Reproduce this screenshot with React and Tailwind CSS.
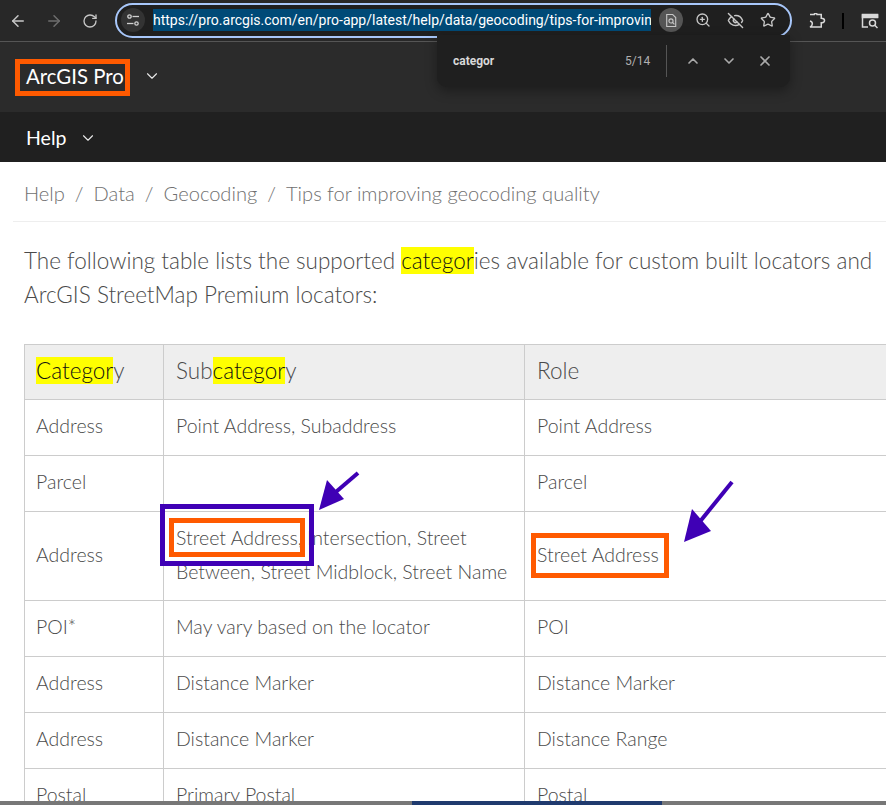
import React from "react";
import { ArrowLeft, ArrowRight, RotateCw, ZoomIn, EyeOff, Star, ChevronDown, ChevronUp, X } from "lucide-react";

const Hl = ({ children }) => <span className="bg-[#ffff00] text-[#111]">{children}</span>;

const rows = [
  ["Address", "Point Address, Subaddress", "Point Address", "h-[56px]"],
  ["Parcel", "", "Parcel", "h-[56px]"],
  ["Address", "Street Address, Intersection, Street Between, Street Midblock, Street Name", "Street Address", "h-[89px]"],
  ["POI*", "May vary based on the locator", "POI", "h-[56px]"],
  ["Address", "Distance Marker", "Distance Marker", "h-[56px]"],
  ["Address", "Distance Marker", "Distance Range", "h-[56px]"],
  ["Postal", "Primary Postal", "Postal", "h-[56px]"],
];

export default function App() {
  return (
    <div className="relative w-[886px] h-[805px] overflow-hidden bg-white font-['Lato',sans-serif] font-light text-[#4a4a4a]">
      {/* Browser toolbar */}
      <div className="flex items-center h-[42px] bg-[#282828] border-b border-[#555] pl-[9px]">
        <ArrowLeft className="w-[18px] h-[18px] text-[#c7c7c7]" strokeWidth={2} />
        <ArrowRight className="w-[18px] h-[18px] ml-[18px] text-[#6e6e6e]" strokeWidth={2} />
        <RotateCw className="w-[16px] h-[16px] ml-[19px] text-[#c7c7c7]" strokeWidth={2} />
        <div className="flex items-center ml-[17px] w-[677px] h-[35px] -mt-[1px] rounded-full border-2 border-[#a8c7fa] bg-[#1f1f1f] pl-[4px] pr-[14px]">
          <div className="flex items-center justify-center w-[24px] h-[24px] rounded-full bg-[#333]">
            <svg viewBox="0 0 14 14" className="w-[14px] h-[14px]" fill="none" stroke="#d0d0d0" strokeWidth="1.3">
              <circle cx="3.5" cy="3.5" r="1.7" />
              <path d="M6.5 3.5H13" />
              <circle cx="10.5" cy="10.5" r="1.7" />
              <path d="M1 10.5H7.5" />
            </svg>
          </div>
          <span className="ml-[8px] h-[22px] w-[498px] overflow-hidden whitespace-nowrap bg-[#004a77] text-white font-['Roboto',sans-serif] font-normal text-[14px] leading-[22px]">
            https://pro.arcgis.com/en/pro-app/latest/help/data/geocoding/tips-for-improving-geocoding-quality
          </span>
          <div className="flex items-center justify-center ml-[8px] w-[24px] h-[24px] rounded-full bg-[#555]">
            <svg viewBox="0 0 14 16" className="w-[12px] h-[15px]" fill="none" stroke="#c7c7c7" strokeWidth="1.3">
              <path d="M2 1H9L12.5 4.5V15H2Z" />
              <circle cx="7" cy="8.5" r="2.4" />
              <path d="M8.8 10.3L11 12.5" />
            </svg>
          </div>
          <ZoomIn className="ml-[12px] w-[16px] h-[16px] text-[#c7c7c7]" />
          <EyeOff className="ml-[16px] w-[17px] h-[17px] text-[#c7c7c7]" />
          <Star className="ml-[16px] w-[16px] h-[16px] text-[#c7c7c7]" />
        </div>
        <svg viewBox="0 0 18 16" className="ml-[17px] w-[17px] h-[15px]" fill="none" stroke="#d8d8d8" strokeWidth="1.6">
          <path d="M1 1.5H5.5C5.5 0.5 6.5 0.5 7 0.5C7.5 0.5 8.5 0.5 8.5 1.5H13V5.5C15 5.5 16.5 6.5 16.5 8C16.5 9.5 15 10.5 13 10.5V15H1C3 14 3.5 12.5 3.5 11.5C3.5 10.5 3 9 1 8.5" />
        </svg>
        <div className="ml-[16px] w-[2px] h-[16px] bg-black" />
        <svg viewBox="0 0 18 16" className="ml-[17px] w-[18px] h-[16px]" fill="none" stroke="#d8d8d8" strokeWidth="1.5">
          <path d="M7 14H1.5V1.5H16.5V5" />
          <path d="M1.5 2H16.5V4.5H1.5Z" fill="#d8d8d8" />
          <circle cx="11.5" cy="10" r="3" />
          <path d="M13.8 12.3L16.5 15" />
        </svg>
      </div>

      {/* Product header */}
      <div className="flex items-center h-[70px] bg-[#2b2b2b] pl-[15px]">
        <div className="flex items-center h-[37px] border-[5px] border-[#ff5a00] pl-[6px] pb-[2px] text-white font-normal text-[20.4px] leading-none w-[115px] whitespace-nowrap">
          ArcGIS Pro
        </div>
        <ChevronDown className="ml-[13px] w-[18px] h-[18px] text-[#e8e8e8] -mt-[2px]" strokeWidth={1.5} />
      </div>

      {/* Help bar */}
      <div className="flex items-center h-[50px] bg-[#202020] pl-[26px] pt-[1px] text-white font-normal text-[19.5px]">
        Help
        <ChevronDown className="ml-[13px] w-[18px] h-[18px] text-[#e8e8e8]" strokeWidth={1.5} />
      </div>

      {/* Breadcrumb */}
      <div className="ml-[13px] h-[60px] border-b border-[#eee] pl-[11px] pt-[3px] flex items-center gap-[10px] text-[20.1px] text-[#707070]">
        <span>Help</span><span>/</span><span>Data</span><span>/</span><span>Geocoding</span><span>/</span><span>Tips for improving geocoding quality</span>
      </div>

      {/* Body */}
      <div className="pl-[24px] pt-[22px]">
        <p className="w-[862px] text-[22.5px] leading-[34px] whitespace-nowrap">
          The following table lists the supported <Hl>categor</Hl>ies available for custom built locators and
          <br />
          ArcGIS StreetMap Premium locators:
        </p>
        <table className="mt-[32px] w-[900px] table-fixed border-collapse text-[19.5px] leading-[34px]">
          <colgroup>
            <col className="w-[139px]" />
            <col className="w-[361px]" />
            <col className="w-[400px]" />
          </colgroup>
          <thead>
            <tr className="h-[55px] bg-[#eee] text-[22.5px]">
              <th className="border border-[#ccc] pl-[11px] pr-[12px] pb-[2px] text-left font-light"><Hl>Categor</Hl>y</th>
              <th className="border border-[#ccc] px-[12px] pb-[2px] text-left font-light">Sub<Hl>categor</Hl>y</th>
              <th className="border border-[#ccc] px-[12px] pb-[2px] text-left font-light">Role</th>
            </tr>
          </thead>
          <tbody>
            {rows.map((r, i) => (
              <tr key={i} className={r[3]}>
                <td className="border border-[#ccc] pl-[11px] pr-[12px] pb-[3px]">{r[0]}</td>
                <td className="border border-[#ccc] px-[12px] pb-[3px]">{r[1]}</td>
                <td className="border border-[#ccc] px-[12px] pb-[3px]">{r[2]}</td>
              </tr>
            ))}
          </tbody>
        </table>
      </div>

      {/* Find bar */}
      <div className="absolute left-[437px] top-[35px] w-[353px] h-[52px] rounded-b-[10px] bg-[#1f1f1f] shadow-[0_4px_12px_rgba(0,0,0,0.35)] flex items-center pl-[16px] font-['Roboto',sans-serif] font-normal">
        <span className="w-[172px] text-[12px] font-bold text-[#d8d8d8]">categor</span>
        <span className="w-[36px] text-[12px] text-[#b0b0b0]">5/14</span>
        <div className="ml-[5px] w-px h-[32px] bg-[#555]" />
        <ChevronUp className="ml-[18px] w-[16px] h-[16px] text-[#aaa]" strokeWidth={2.5} />
        <ChevronDown className="ml-[20px] w-[16px] h-[16px] text-[#aaa]" strokeWidth={2.5} />
        <X className="ml-[20px] w-[16px] h-[16px] text-[#aaa]" strokeWidth={2.5} />
      </div>

      {/* Annotations */}
      <div className="absolute left-[160px] top-[504px] w-[154px] h-[62px] border-[5px] border-[#3f00b5]" />
      <div className="absolute left-[169px] top-[518px] w-[136px] h-[39px] border-[5px] border-[#ff5a00]" />
      <div className="absolute left-[531px] top-[533px] w-[138px] h-[45px] border-[5px] border-[#ff5a00]" />
      <svg className="absolute left-[315px] top-[468px] w-[48px] h-[46px]" viewBox="0 0 48 46">
        <path d="M43 5 L15 29" stroke="#3f00b5" strokeWidth="4" fill="none" />
        <path d="M4 42 L12 12 L29 31 Z" fill="#3f00b5" />
      </svg>
      <svg className="absolute left-[680px] top-[476px] w-[56px] h-[68px]" viewBox="0 0 56 68">
        <path d="M52 6 L18 48" stroke="#3f00b5" strokeWidth="4" fill="none" />
        <path d="M4 66 L12 33 L31 55 Z" fill="#3f00b5" />
      </svg>

      {/* Bottom strip */}
      <div className="absolute left-0 bottom-0 w-full h-[4px] flex bg-[#777]">
        <div className="w-[412px]" />
        <div className="w-[250px] bg-[#1f3a6e]" />
      </div>
    </div>
  );
}
